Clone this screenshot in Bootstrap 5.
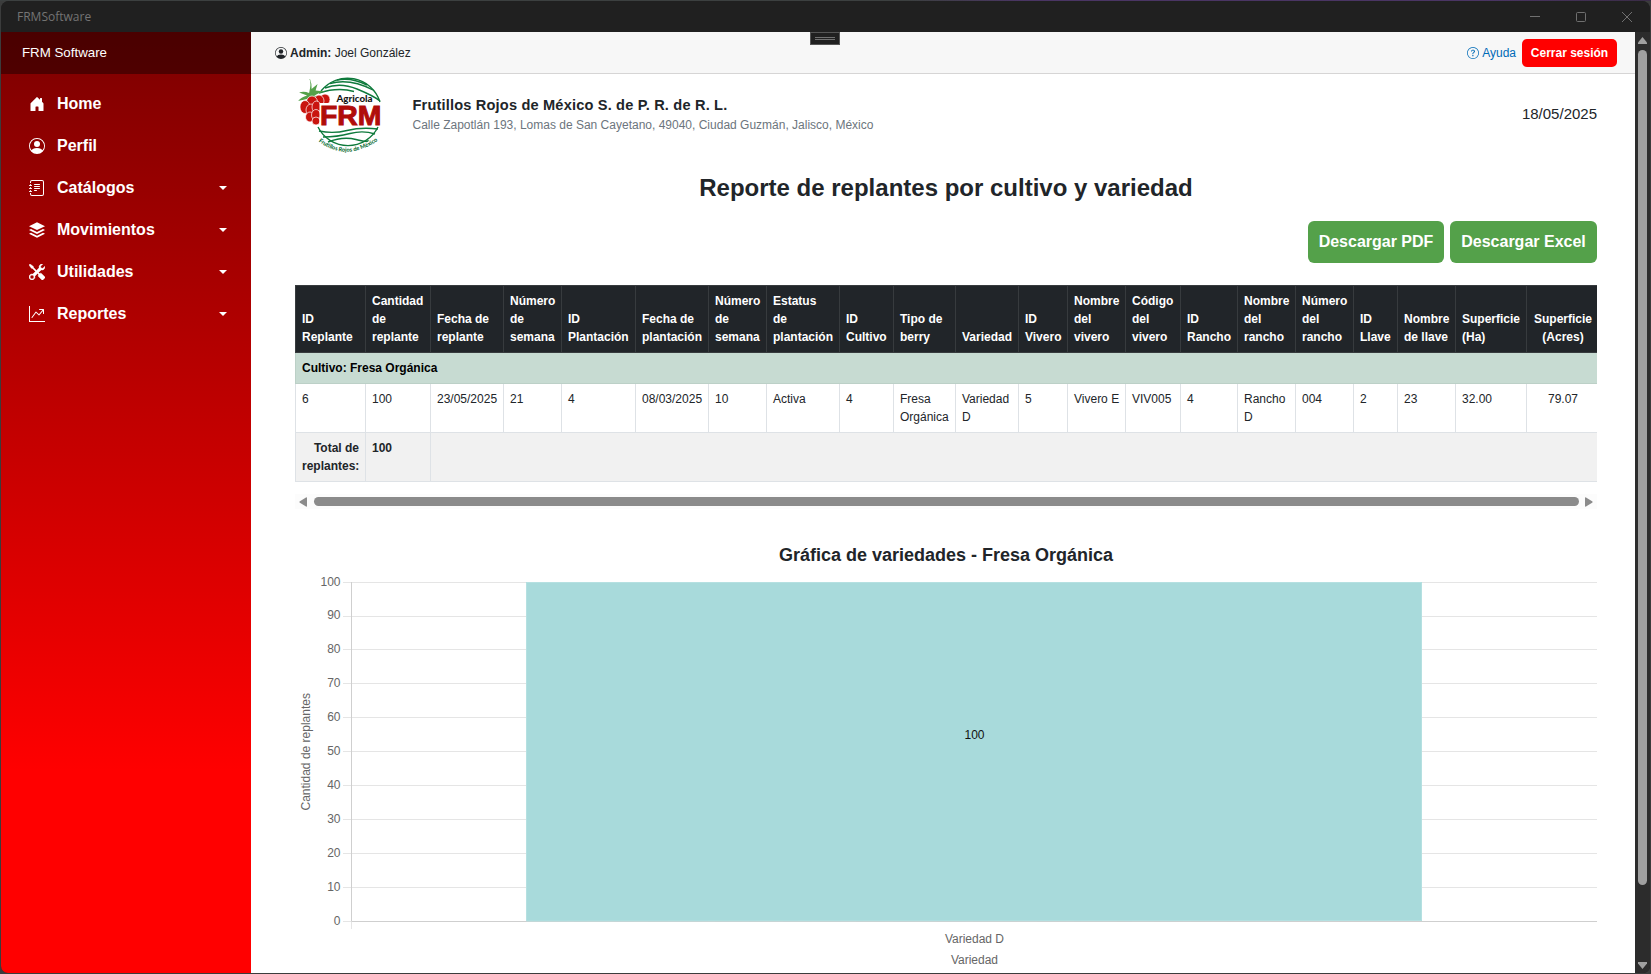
<!DOCTYPE html>
<html lang="es">
<head>
<meta charset="utf-8">
<title>FRMSoftware</title>
<link rel="stylesheet" href="https://cdn.jsdelivr.net/npm/bootstrap@5.3.0/dist/css/bootstrap.min.css">
<style>
body{font-family:"Liberation Sans",Arial,sans-serif;background:linear-gradient(90deg,#3c4040 0,#3c4040 55%,#4a3564 62%,#4a3564 90%,#3a2c46 100%) top/100% 1px no-repeat #3b3c3c;width:1651px;height:974px;overflow:hidden;padding:1px}
.win{width:1649px;height:972px;border-radius:8px 8px 7px 7px;overflow:hidden;background:#202020}
.titlebar{height:31px;background:#202020;color:#747474;font:12px "Open Sans",sans-serif;padding:0 18px 0 16px}
.wbtns{gap:36px}
.side{width:250px;background:linear-gradient(180deg,#7c0000 0,#f00 78.5%)}
.brandbar{height:42px;background:rgba(0,0,0,.4);color:#fff;font-size:13.3px;padding-left:21px}
.menu{padding-top:9px}
.menu a{height:42px;color:#fff;font-weight:700;font-size:16px;padding:0 24px 0 27.5px;text-decoration:none}
.menu svg{width:16px;height:16px;margin-right:12.5px;fill:#fff}
.caretdn{border:4px solid transparent;border-top-color:#fff;border-bottom:0}
.topbar{height:42px;background:#f7f7f7;border-bottom:1px solid #d6d5d5;padding:0 18px 0 24px;font-size:12px;position:relative}
.topbar svg{margin-right:3px}
.handle{position:absolute;left:559px;top:0;width:30px;height:13px;background:#202020;border:1px solid #555;padding:4px;display:flex;flex-direction:column;gap:1px}
.handle i{height:1px;background:#717171}
.ayuda{color:#006bb7;margin-right:6px}
.logout{background:#f00;color:#fff;font-weight:700;font-size:12px;height:28px;width:95px;border-radius:5px}
.page{padding:0 38px 0 44px;height:899px;overflow:hidden}
.hdr{height:80px}
.logo{margin-right:25.5px}
.coname{font-size:14.6px;font-weight:700;line-height:20px;letter-spacing:.17px}
.coaddr{font-size:12px;line-height:18px;color:#6c757d;padding-top:1px}
.datev{font-size:15px}
.ttl{font-size:24px;font-weight:700;line-height:30px;margin:19px 0 0}
.dlrow{margin-top:18px;margin-bottom:22px;gap:6px}
.dl{background:#54a14a;color:#fff;font-weight:700;font-size:16px;height:42px;border-radius:6px}
.dl-pdf{width:136px}
.dl-xls{width:147px}
.tblwrap{width:1302px;overflow:hidden}
.rep{table-layout:fixed;width:1304px;border-collapse:separate;border-spacing:0;font-size:12px;line-height:18px;margin:0;color:#212529}
.rep>:not(caption)>tr>*{padding:6px 0 6px 6px;border:0 solid #dee2e6;border-width:0 1px 1px 0;box-shadow:none;white-space:nowrap;vertical-align:top}
.rep>*>tr>*:first-child{border-left-width:1px!important}
.rep>thead>tr>th{background:#212529!important;color:#fff!important;vertical-align:bottom!important;border-color:#373b3e!important;border-top-width:1px!important}
.rep>tbody>tr.grp>td{background:#c7dbd2!important;color:#000;font-weight:700;border-color:#bcd0c7!important}
.rep>tbody>tr.tot>td{background:#f1f1f1!important;font-weight:700}
.rep>tbody>tr.tot>td.tlabel{text-align:right;padding-right:6px}
.rep .c{text-align:center;padding-left:1px!important}
.hs{height:15px;width:1302px;background:#fcfcfc;margin-top:12px;padding:0 4px 0 4px}
.hs .th{height:9px;width:1265px;border-radius:5px;background:#8b8b8b}
.vs{width:15px;background:#2c2c2c;padding:5px 0 4px}
.vs .th{width:9px;height:835px;border-radius:5px;background:#9f9f9f;margin-top:6px}
.gt{font-size:18px;font-weight:700;line-height:22px;margin:35px 0 1px}
.chart text{font:12px "Liberation Sans",Arial,sans-serif;fill:#666}
</style>
</head>
<body>
<div class="win d-flex flex-column">
  <div class="titlebar d-flex align-items-center justify-content-between">
    <span>FRMSoftware</span>
    <div class="wbtns d-flex">
      <svg width="10" height="10" stroke="#707070"><path d="M0 4.5h10"/></svg>
      <svg width="10" height="10" stroke="#707070" fill="none"><rect x=".5" y=".5" width="9" height="9" rx="1"/></svg>
      <svg width="10" height="10" stroke="#707070"><path d="M0 0 10 10M10 0 0 10"/></svg>
    </div>
  </div>
  <div class="d-flex flex-grow-1">
    <aside class="side flex-shrink-0">
      <div class="brandbar d-flex align-items-center">FRM Software</div>
      <nav class="menu d-flex flex-column">
        <a href="#" class="d-flex align-items-center"><svg viewBox="0 0 16 16"><path d="M6.5 14.5v-3.505c0-.245.25-.495.5-.495h2c.25 0 .5.25.5.5v3.5a.5.5 0 0 0 .5.5h4a.5.5 0 0 0 .5-.5v-7a.5.5 0 0 0-.146-.354L13 5.793V2.5a.5.5 0 0 0-.5-.5h-1a.5.5 0 0 0-.5.5v1.293L8.354 1.146a.5.5 0 0 0-.708 0l-6 6A.5.5 0 0 0 1.500 7.500v7a.5.5 0 0 0 .5.5h4a.5.5 0 0 0 .5-.5"/></svg>Home</a>
        <a href="#" class="d-flex align-items-center"><svg viewBox="0 0 16 16"><path d="M11 6a3 3 0 1 1-6 0 3 3 0 0 1 6 0"/><path fill-rule="evenodd" d="M0 8a8 8 0 1 1 16 0A8 8 0 0 1 0 8m8-7a7 7 0 0 0-5.468 11.370C3.242 11.226 4.805 10 8 10s4.757 1.225 5.468 2.370A7 7 0 0 0 8 1"/></svg>Perfil</a>
        <a href="#" class="d-flex align-items-center"><svg viewBox="0 0 16 16"><path d="M5 10.500a.5.5 0 0 1 .5-.5h2a.5.5 0 0 1 0 1h-2a.5.5 0 0 1-.5-.5m0-2a.5.5 0 0 1 .5-.5h5a.5.5 0 0 1 0 1h-5a.5.5 0 0 1-.5-.5m0-2a.5.5 0 0 1 .5-.5h5a.5.5 0 0 1 0 1h-5a.5.5 0 0 1-.5-.5m0-2a.5.5 0 0 1 .5-.5h5a.5.5 0 0 1 0 1h-5a.5.5 0 0 1-.5-.5"/><path d="M3 0h10a2 2 0 0 1 2 2v12a2 2 0 0 1-2 2H3a2 2 0 0 1-2-2v-1h1v1a1 1 0 0 0 1 1h10a1 1 0 0 0 1-1V2a1 1 0 0 0-1-1H3a1 1 0 0 0-1 1v1H1V2a2 2 0 0 1 2-2"/><path d="M1 5v-.5a.5.5 0 0 1 1 0V5h.5a.5.5 0 0 1 0 1h-2a.5.5 0 0 1 0-1zm0 3v-.5a.5.5 0 0 1 1 0V8h.5a.5.5 0 0 1 0 1h-2a.5.5 0 0 1 0-1zm0 3v-.5a.5.5 0 0 1 1 0v.5h.5a.5.5 0 0 1 0 1h-2a.5.5 0 0 1 0-1z"/></svg><span class="flex-grow-1">Catálogos</span><i class="caretdn"></i></a>
        <a href="#" class="d-flex align-items-center"><svg viewBox="0 0 16 16"><path d="M8 .3 16 4.300 8 8.100 0 4.300z"/><path d="M2 7l6 2.900L14 7l2 1L8 11.900 0 8z"/><path d="M2 10.800l6 2.900 6-2.900 2 1-8 3.900-8-3.900z"/></svg><span class="flex-grow-1">Movimientos</span><i class="caretdn"></i></a>
        <a href="#" class="d-flex align-items-center"><svg viewBox="0 0 16 16"><path fill-rule="evenodd" stroke="#fff" stroke-width=".4" d="M1 0 0 1l2.200 3.081a1 1 0 0 0 .815.419h.07a1 1 0 0 1 .708.293l2.675 2.675-2.617 2.654A3.003 3.003 0 0 0 0 13a3 3 0 1 0 5.878-.851l2.654-2.617.968.968-.305.914a1 1 0 0 0 .242 1.023l3.270 3.270a.997.997 0 0 0 1.414 0l1.586-1.586a.997.997 0 0 0 0-1.414l-3.270-3.270a1 1 0 0 0-1.023-.242L10.500 9.500l-.96-.96 2.680-2.643A3.005 3.005 0 0 0 16 3q0-.405-.102-.777l-2.140 2.141L12 4l-.364-1.757L13.777.102a3 3 0 0 0-3.675 3.680L7.462 6.460 4.793 3.793a1 1 0 0 1-.293-.707v-.071a1 1 0 0 0-.419-.814zM3 11l.471.242.529.026.287.445.445.287.026.529L5 13l-.242.471-.026.529-.445.287-.287.445-.529.026L3 15l-.471-.242L2 14.732l-.287-.445L1.268 14l-.026-.529L1 13l.242-.471.026-.529.445-.287.287-.445.529-.026z"/></svg><span class="flex-grow-1">Utilidades</span><i class="caretdn"></i></a>
        <a href="#" class="d-flex align-items-center"><svg viewBox="0 0 16 16"><path fill-rule="evenodd" d="M0 0h1v15h15v1H0zm10 3.500a.5.5 0 0 1 .5-.5h4a.5.5 0 0 1 .5.5v4a.5.5 0 0 1-1 0V4.900l-3.613 4.417a.5.5 0 0 1-.74.037L7.060 6.767l-3.656 5.027a.5.5 0 0 1-.808-.588l4-5.500a.5.5 0 0 1 .758-.06l2.609 2.610L13.445 4H10.500a.5.5 0 0 1-.5-.5"/></svg><span class="flex-grow-1">Reportes</span><i class="caretdn"></i></a>
      </nav>
    </aside>
    <main class="flex-grow-1 bg-white">
      <div class="topbar d-flex align-items-center justify-content-between">
        <div class="d-flex align-items-center"><svg width="12" height="12" viewBox="0 0 16 16" fill="#212529"><path d="M11 6a3 3 0 1 1-6 0 3 3 0 0 1 6 0"/><path fill-rule="evenodd" d="M0 8a8 8 0 1 1 16 0A8 8 0 0 1 0 8m8-7a7 7 0 0 0-5.468 11.370C3.242 11.226 4.805 10 8 10s4.757 1.225 5.468 2.370A7 7 0 0 0 8 1"/></svg><span><b>Admin:</b> Joel González</span></div>
        <div class="handle"><i></i><i></i></div>
        <div class="d-flex align-items-center"><span class="ayuda d-flex align-items-center"><svg width="12" height="12" viewBox="0 0 16 16" fill="currentColor"><path d="M8 15A7 7 0 1 1 8 1a7 7 0 0 1 0 14m0 1A8 8 0 1 0 8 0a8 8 0 0 0 0 16"/><path d="M5.255 5.786a.237.237 0 0 0 .241.247h.825c.138 0 .248-.113.266-.25.09-.656.54-1.134 1.342-1.134.686 0 1.314.343 1.314 1.168 0 .635-.374.927-.965 1.371-.673.489-1.206 1.060-1.168 1.987l.003.217a.25.25 0 0 0 .25.246h.811a.25.25 0 0 0 .25-.25v-.105c0-.718.273-.927 1.010-1.486.609-.463 1.244-.977 1.244-2.056 0-1.511-1.276-2.241-2.673-2.241-1.267 0-2.655.59-2.750 2.286m1.557 5.763c0 .533.425.927 1.010.927.609 0 1.028-.394 1.028-.927 0-.552-.42-.94-1.029-.94-.584 0-1.009.388-1.009.94"/></svg>Ayuda</span>
        <button class="logout btn p-0">Cerrar sesión</button></div>
      </div>
      <div class="page">
        <div class="hdr d-flex align-items-center">
          <svg width="92" height="80" viewBox="0 0 92 80" class="logo flex-shrink-0">
            <defs><path id="arc" d="M23.500 67.500Q51 88 81.500 67.500"/></defs>
            <g fill="none" stroke="#0f7a3c" stroke-width="1.400">
              <path d="M26 17A34 34 0 0 1 85 28M23 53A33.500 33.500 0 0 0 83 53"/>
              <path d="M35 9.500Q55 4 78 16M30 14Q45 8 62 15T85 27M24 19Q43 13 59 17.500M42 6Q56 3 72 11"/>
              <path d="M24 57Q38 60 52 56.500T83 55M28 63Q42 63 55 59.500T80 60M33 68Q48 62 61 65.500T73 66"/>
            </g>
            <path fill="#54a14a" d="M15 5q2 5 1.600 10l6-5q-1.500 4.500-2 6.500l9.500 1q-7 1-11 4.500l9-.5q-7 4-14 3l-11 2.500q3-4 9-5.500l-8-3q5-1.500 10 .5Q16.500 9 14.500 5z"/>
            <g fill="#c9140f" stroke="#fff" stroke-width=".7">
              <ellipse cx="30" cy="25.500" rx="5" ry="5.500"/><ellipse cx="24" cy="27" rx="5" ry="6"/><ellipse cx="17" cy="28" rx="5.500" ry="6"/>
              <ellipse cx="10" cy="33" rx="5" ry="6.500"/><ellipse cx="16" cy="36" rx="5" ry="6"/><ellipse cx="21.500" cy="33" rx="4.500" ry="6"/>
              <ellipse cx="15" cy="43" rx="4.500" ry="5"/><ellipse cx="21" cy="41" rx="4.500" ry="5.500"/><ellipse cx="21" cy="47" rx="4" ry="4"/>
            </g>
            <path fill="#fff" d="M24.500 29H87V52H24.500z"/>
            <text x="41.500" y="27.500" textLength="36" lengthAdjust="spacingAndGlyphs" font-family="Lato" font-weight="900" font-size="8.500" fill="#151515">Agricola</text>
            <text x="25" y="50.500" textLength="61.500" lengthAdjust="spacingAndGlyphs" font-family="Liberation Sans" font-weight="700" font-size="28.500" fill="#b00d0a" stroke="#b00d0a" stroke-width="1">FRM</text>
            <text font-family="Lato" font-weight="900" font-size="5.800" fill="#0b6e35"><textPath href="#arc" textLength="64" lengthAdjust="spacingAndGlyphs">Frutillos Rojos de México</textPath></text>
          </svg>
          <div class="flex-grow-1"><div class="coname">Frutillos Rojos de México S. de P. R. de R. L.</div><div class="coaddr">Calle Zapotlán 193, Lomas de San Cayetano, 49040, Ciudad Guzmán, Jalisco, México</div></div>
          <span class="datev">18/05/2025</span>
        </div>
        <h1 class="ttl text-center">Reporte de replantes por cultivo y variedad</h1>
        <div class="d-flex justify-content-end dlrow">
          <button class="dl dl-pdf btn p-0">Descargar PDF</button><button class="dl dl-xls btn p-0">Descargar Excel</button>
        </div>
        <div class="tblwrap">
          <table class="rep table">
            <colgroup><col width="71"><col width="65"><col width="73"><col width="58"><col width="74"><col width="73"><col width="58"><col width="73"><col width="54"><col width="62"><col width="63"><col width="49"><col width="58"><col width="55"><col width="57"><col width="58"><col width="58"><col width="44"><col width="58"><col width="71"><col width="72"></colgroup>
            <thead><tr><th>ID<br>Replante</th><th>Cantidad<br>de<br>replante</th><th>Fecha de<br>replante</th><th>Número<br>de<br>semana</th><th>ID<br>Plantación</th><th>Fecha de<br>plantación</th><th>Número<br>de<br>semana</th><th>Estatus<br>de<br>plantación</th><th>ID<br>Cultivo</th><th>Tipo de<br>berry</th><th>Variedad</th><th>ID<br>Vivero</th><th>Nombre<br>del<br>vivero</th><th>Código<br>del<br>vivero</th><th>ID<br>Rancho</th><th>Nombre<br>del<br>rancho</th><th>Número<br>del<br>rancho</th><th>ID<br>Llave</th><th>Nombre<br>de llave</th><th>Superficie<br>(Ha)</th><th class="c">Superficie<br>(Acres)</th></tr></thead>
            <tbody>
              <tr class="grp"><td colspan="21">Cultivo: Fresa Orgánica</td></tr>
              <tr><td>6</td><td>100</td><td>23/05/2025</td><td>21</td><td>4</td><td>08/03/2025</td><td>10</td><td>Activa</td><td>4</td><td>Fresa<br>Orgánica</td><td>Variedad<br>D</td><td>5</td><td>Vivero E</td><td>VIV005</td><td>4</td><td>Rancho<br>D</td><td>004</td><td>2</td><td>23</td><td>32.00</td><td class="c">79.07</td></tr>
              <tr class="tot"><td class="tlabel">Total de<br>replantes:</td><td>100</td><td colspan="19"></td></tr>
            </tbody>
          </table>
        </div>
        <div class="hs d-flex align-items-center justify-content-between">
          <svg width="8" height="10" fill="#8b8b8b"><path d="M7 .5Q8 0 8 1V9Q8 10 7 9.500L.5 5.500V4.500z"/></svg><div class="th"></div><svg width="8" height="10" fill="#8b8b8b"><path d="M1 .5Q0 0 0 1V9Q0 10 1 9.500L7.500 5.500V4.500z"/></svg>
        </div>
        <h2 class="gt text-center">Gráfica de variedades - Fresa Orgánica</h2>
        <svg class="chart d-block" width="1302" height="406" viewBox="295 567 1302 406">
          <path stroke="#e5e5e5" d="M343 582.500H1597M343 616.500H1597M343 649.500H1597M343 683.500H1597M343 717.500H1597M343 751.500H1597M343 785.500H1597M343 819.500H1597M343 853.500H1597M343 887.500H1597M343 921.500H351M351.500 922V929"/>
          <path stroke="#cfcfcf" fill="none" d="M351.500 582V921.500H1597"/>
          <rect x="526" y="582" width="896" height="339" fill="#a8dadb"/>
          <path d="M526.500 921V582.500H1421.500V920.500z" stroke="#b5e0e1" fill="none"/>
          <g text-anchor="end"><text x="340.500" y="586">100</text><text x="340.500" y="619">90</text><text x="340.500" y="653">80</text><text x="340.500" y="687">70</text><text x="340.500" y="721">60</text><text x="340.500" y="755">50</text><text x="340.500" y="789">40</text><text x="340.500" y="823">30</text><text x="340.500" y="857">20</text><text x="340.500" y="891">10</text><text x="340.500" y="925">0</text></g>
          <text transform="translate(310 810.500) rotate(-90)" textLength="117.500">Cantidad de replantes</text>
          <text x="945" y="943" textLength="59">Variedad D</text><text x="951" y="964" textLength="47">Variedad</text>
          <text x="964.500" y="739" style="fill:#111">100</text>
        </svg>
      </div>
    </main>
    <div class="vs d-flex flex-column align-items-center">
      <svg width="9" height="7" fill="#9f9f9f"><path d="M4.500 0 9 5.500V7H0V5.500z"/></svg>
      <div class="th"></div>
      <svg width="9" height="7" fill="#9f9f9f" class="mt-auto"><path d="M4.500 7 9 1.500V0H0V1.500z"/></svg>
    </div>
  </div>
</div>
<script src="https://cdn.jsdelivr.net/npm/bootstrap@5.3.0/dist/js/bootstrap.bundle.min.js"></script>
</body>
</html>
